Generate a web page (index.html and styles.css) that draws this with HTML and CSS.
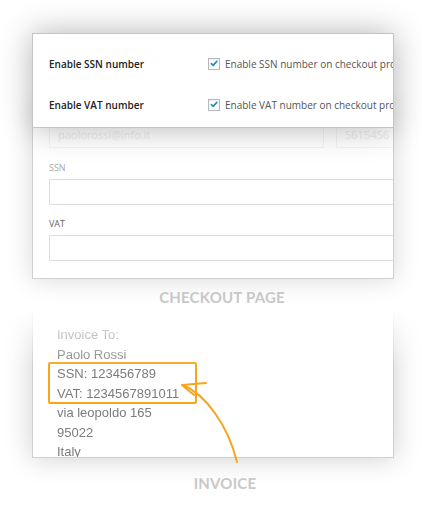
FILE: index.html
```html
<!DOCTYPE html>
<html lang="en">
<head>
<meta charset="utf-8">
<title>SSN and VAT settings</title>
<link rel="stylesheet" href="styles.css">
</head>
<body>
<div class="stage">
  <section class="settings">
    <div class="setting-row">
      <span class="setting-name">Enable SSN number</span>
      <span class="check"><svg viewBox="0 0 11 11" width="11" height="11"><path d="M2.6 5.6 L4.6 7.6 L8.6 3.2" fill="none" stroke="#1e8cbe" stroke-width="1.8" stroke-linecap="round" stroke-linejoin="round"/></svg></span>
      <span class="setting-desc">Enable SSN number on checkout process</span>
    </div>
    <div class="setting-row">
      <span class="setting-name">Enable VAT number</span>
      <span class="check"><svg viewBox="0 0 11 11" width="11" height="11"><path d="M2.6 5.6 L4.6 7.6 L8.6 3.2" fill="none" stroke="#1e8cbe" stroke-width="1.8" stroke-linecap="round" stroke-linejoin="round"/></svg></span>
      <span class="setting-desc">Enable VAT number on checkout process</span>
    </div>
  </section>

  <section class="checkout">
    <div class="faded-row">
      <div class="field field-wide">paolorossi@info.it</div>
      <div class="field field-narrow">5615456</div>
    </div>
    <div class="field-label muted">SSN</div>
    <div class="field"></div>
    <div class="field-label">VAT</div>
    <div class="field"></div>
  </section>

  <h2 class="caption">CHECKOUT PAGE</h2>

  <div class="invoice-fade">
    <section class="invoice">
      <div class="line">Invoice To:</div>
      <div class="line">Paolo Rossi</div>
      <div class="line">SSN: 123456789</div>
      <div class="line">VAT: 1234567891011</div>
      <div class="line">via leopoldo 165</div>
      <div class="line">95022</div>
      <div class="line">Italy</div>
      <div class="highlight"></div>
    </section>
  </div>

  <h2 class="caption caption-invoice">INVOICE</h2>

  <svg class="arrow" width="422" height="507" viewBox="0 0 422 507">
    <path d="M183 385 C205 394 228 425 237 462" fill="none" stroke="#f8a51c" stroke-width="2" stroke-linecap="round"/>
    <path d="M206 383 L182 385 L194 395" fill="none" stroke="#f8a51c" stroke-width="2" stroke-linecap="round" stroke-linejoin="round"/>
  </svg>
</div>
</body>
</html>
```

FILE: styles.css
```css
html, body {
  margin: 0;
  padding: 0;
  background: #ffffff;
}

.stage {
  position: relative;
  width: 362px;
  padding: 33px 0 0 32px;
}

/* settings card */
.settings {
  position: relative;
  z-index: 2;
  box-sizing: border-box;
  height: 95px;
  padding: 9px 0 0 16px;
  background: #ffffff;
  border: 1px solid #c4c4c4;
  box-shadow: 0 0 30px rgba(0, 0, 0, 0.3);
  overflow: hidden;
  font-family: "Open Sans", "DejaVu Sans", sans-serif;
  font-size: 10px;
}

.setting-row {
  display: flex;
  align-items: center;
  height: 41px;
  white-space: nowrap;
}

.setting-name {
  flex: none;
  width: 159px;
  font-weight: 600;
  color: #222222;
}

.check {
  flex: none;
  box-sizing: border-box;
  width: 12px;
  height: 12px;
  margin-right: 5px;
  border: 1px solid #b4b9be;
  background: #ffffff;
  box-shadow: inset 0 1px 2px rgba(0, 0, 0, 0.08);
  display: flex;
  align-items: center;
  justify-content: center;
}

.check svg {
  display: block;
}

.setting-desc {
  color: #555555;
}

/* checkout form panel */
.checkout {
  position: relative;
  z-index: 1;
  box-sizing: border-box;
  height: 171px;
  margin-top: -20px;
  padding: 13px 0 0 16px;
  background: #ffffff;
  border: 1px solid #d0d0d0;
  box-shadow: 0 0 24px rgba(0, 0, 0, 0.16);
  overflow: hidden;
  font-family: "Open Sans", "DejaVu Sans", sans-serif;
}

.faded-row {
  display: flex;
  gap: 12px;
}

.field {
  box-sizing: border-box;
  width: 400px;
  height: 26px;
  border: 1px solid #dedede;
  background: #ffffff;
}

.faded-row .field {
  border-color: #f4f4f4;
  background: transparent;
  color: #ededed;
  font-size: 11px;
  line-height: 24px;
  padding-left: 8px;
}

.faded-row .field-wide {
  flex: none;
  width: 275px;
}

.faded-row .field-narrow {
  flex: none;
  width: 80px;
}

.field-label {
  margin: 12px 0 4px;
  font-size: 9px;
  line-height: 14px;
  color: #666666;
}

.faded-row + .field-label {
  margin-top: 13px;
}

.field-label.muted {
  color: #a8a8a8;
}

/* captions */
.caption {
  position: relative;
  z-index: 3;
  margin: 0;
  padding: 9px 0 0 18px;
  text-align: center;
  font-family: Lato, "Liberation Sans", sans-serif;
  font-weight: 700;
  font-size: 15px;
  line-height: 18px;
  letter-spacing: 0.2px;
  color: #c8c8c8;
}

.caption-invoice {
  margin-top: -8px;
  padding-top: 0;
  padding-left: 24px;
}

/* invoice */
.invoice-fade {
  margin: -5px -30px 0;
  padding: 0 30px 24px;
  -webkit-mask-image: linear-gradient(to bottom, transparent 8px, #000 66px);
  mask-image: linear-gradient(to bottom, transparent 8px, #000 66px);
}

.invoice {
  position: relative;
  box-sizing: border-box;
  height: 157px;
  padding: 23px 0 0 24px;
  background: #ffffff;
  border: 1px solid #cfcfcf;
  box-shadow: 0 0 26px rgba(0, 0, 0, 0.2);
  overflow: hidden;
  font-family: "Liberation Sans", Arial, sans-serif;
  font-size: 13px;
  line-height: 19.5px;
  color: #7c7c7c;
}

.highlight {
  position: absolute;
  left: 15px;
  top: 60px;
  box-sizing: border-box;
  width: 149px;
  height: 42px;
  border: 2px solid #f8a51c;
  border-radius: 2px;
}

.arrow {
  position: absolute;
  left: 0;
  top: 0;
  overflow: visible;
  pointer-events: none;
}
```
